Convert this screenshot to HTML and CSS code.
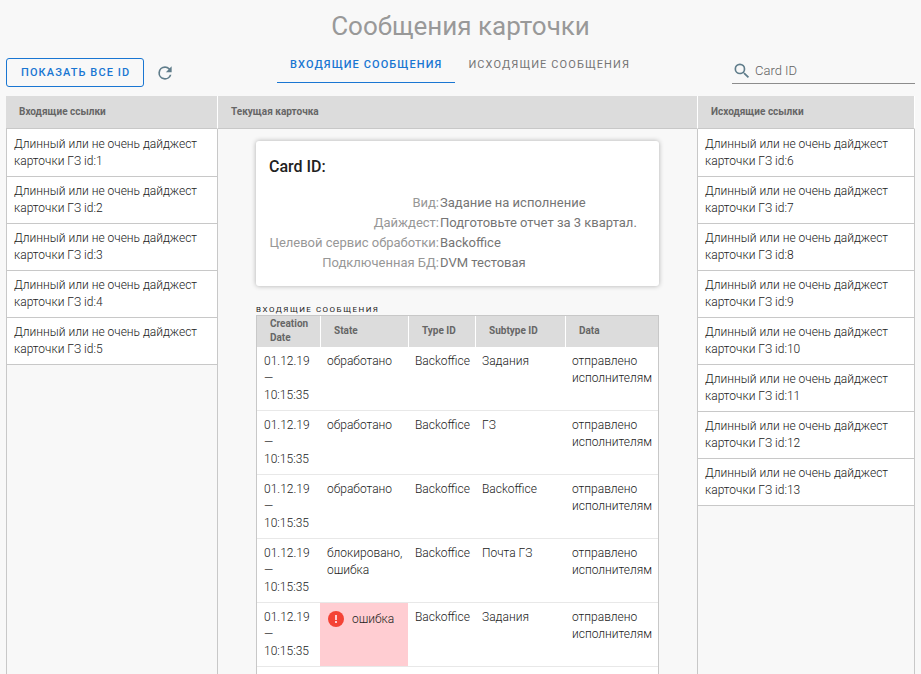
FILE: index.html
```html
<!DOCTYPE html>
<html lang="ru">
<head>
<meta charset="utf-8">
<title>Сообщения карточки</title>
<link rel="stylesheet" href="styles.css">
</head>
<body>
<div class="page">
  <h1 class="title">Сообщения карточки</h1>
  <div class="toolbar">
    <div class="actions">
      <button class="show-all" type="button">Показать все ID</button>
      <button class="refresh" type="button" aria-label="Обновить">
        <svg viewBox="0 0 24 24" width="20" height="20"><path d="M17.65 6.35A7.96 7.96 0 0 0 12 4a8 8 0 1 0 7.73 10h-2.08A6 6 0 1 1 12 6c1.66 0 3.14.69 4.22 1.78L13 11h7V4z"/></svg>
      </button>
    </div>
    <nav class="tabs">
      <a class="tab active" href="#incoming">Входящие сообщения</a>
      <a class="tab" href="#outgoing">Исходящие сообщения</a>
    </nav>
    <label class="search">
      <svg viewBox="0 0 24 24" width="20" height="20"><path d="M15.5 14h-.79l-.28-.27A6.47 6.47 0 0 0 16 9.5 6.5 6.5 0 1 0 9.5 16c1.61 0 3.09-.59 4.23-1.57l.27.28v.79l5 4.99L20.49 19zm-6 0a4.5 4.5 0 1 1 0-9 4.5 4.5 0 0 1 0 9z"/></svg>
      <input type="text" placeholder="Card ID" aria-label="Card ID">
    </label>
  </div>
  <div class="columns">
    <section class="column">
      <h2 class="column-head">Входящие ссылки</h2>
      <ul class="links">
        <li>Длинный или не очень дайджест карточки ГЗ id:1</li>
        <li>Длинный или не очень дайджест карточки ГЗ id:2</li>
        <li>Длинный или не очень дайджест карточки ГЗ id:3</li>
        <li>Длинный или не очень дайджест карточки ГЗ id:4</li>
        <li>Длинный или не очень дайджест карточки ГЗ id:5</li>
      </ul>
    </section>
    <section class="column">
      <h2 class="column-head">Текущая карточка</h2>
      <div class="current">
        <article class="card">
          <h3 class="card-title">Card ID:</h3>
          <dl class="details">
            <dt>Вид:</dt><dd>Задание на исполнение</dd>
            <dt>Дайждест:</dt><dd>Подготовьте отчет за 3 квартал.</dd>
            <dt>Целевой сервис обработки:</dt><dd>Backoffice</dd>
            <dt>Подключенная БД:</dt><dd>DVM тестовая</dd>
          </dl>
        </article>
        <h3 class="overline" id="incoming">Входящие сообщения</h3>
        <table class="messages">
          <colgroup><col class="c-date"><col class="c-state"><col class="c-type"><col class="c-subtype"><col class="c-data"></colgroup>
          <thead>
            <tr><th>Creation Date</th><th>State</th><th>Type ID</th><th>Subtype ID</th><th>Data</th></tr>
          </thead>
          <tbody>
            <tr><td>01.12.19<br>—<br>10:15:35</td><td>обработано</td><td>Backoffice</td><td>Задания</td><td>отправлено исполнителям</td></tr>
            <tr><td>01.12.19<br>—<br>10:15:35</td><td>обработано</td><td>Backoffice</td><td>ГЗ</td><td>отправлено исполнителям</td></tr>
            <tr><td>01.12.19<br>—<br>10:15:35</td><td>обработано</td><td>Backoffice</td><td>Backoffice</td><td>отправлено исполнителям</td></tr>
            <tr><td>01.12.19<br>—<br>10:15:35</td><td>блокировано, ошибка</td><td>Backoffice</td><td>Почта ГЗ</td><td>отправлено исполнителям</td></tr>
            <tr><td>01.12.19<br>—<br>10:15:35</td><td class="error"><div class="error-line"><svg viewBox="0 0 20 20" width="20" height="20"><circle cx="10" cy="10" r="8" fill="#f44336"/><path d="M9 6h2v5H9zM9 12h2v2H9z" fill="#ffcdd2"/></svg><span>ошибка</span></div></td><td>Backoffice</td><td>Задания</td><td>отправлено исполнителям</td></tr>
            <tr><td></td><td></td><td></td><td></td><td></td></tr>
          </tbody>
        </table>
      </div>
    </section>
    <section class="column">
      <h2 class="column-head">Исходящие ссылки</h2>
      <ul class="links">
        <li>Длинный или не очень дайджест карточки ГЗ id:6</li>
        <li>Длинный или не очень дайджест карточки ГЗ id:7</li>
        <li>Длинный или не очень дайджест карточки ГЗ id:8</li>
        <li>Длинный или не очень дайджест карточки ГЗ id:9</li>
        <li>Длинный или не очень дайджест карточки ГЗ id:10</li>
        <li>Длинный или не очень дайджест карточки ГЗ id:11</li>
        <li>Длинный или не очень дайджест карточки ГЗ id:12</li>
        <li>Длинный или не очень дайджест карточки ГЗ id:13</li>
      </ul>
    </section>
  </div>
</div>
</body>
</html>
```
FILE: styles.css
```css
* { box-sizing: border-box; }
body {
  margin: 0;
  background: #f8f8f8;
  color: #212121;
  font-family: Roboto, "Liberation Sans", sans-serif;
  font-size: 12px;
}
h1, h2, h3, ul, dl, dd { margin: 0; padding: 0; }
.page {
  display: flex;
  flex-direction: column;
  height: 100vh;
  padding: 0 6px;
  overflow: hidden;
}
.title {
  padding-top: 8px;
  color: #999;
  font-size: 26px;
  font-weight: 400;
  line-height: 36px;
  text-align: center;
}
.toolbar {
  display: grid;
  grid-template-columns: 271px 1fr 183px;
  align-items: end;
  padding: 10px 0 9px;
  flex: none;
}
.actions { display: flex; align-items: center; }
.show-all {
  height: 29px;
  padding: 0 13px 0 14px;
  border: 1px solid #1976d2;
  border-radius: 3px;
  background: none;
  color: #1976d2;
  font: 500 11px/27px Roboto, sans-serif;
  letter-spacing: .1em;
  text-transform: uppercase;
  white-space: nowrap;
}
.refresh {
  display: flex;
  margin-left: 11px;
  padding: 0;
  border: 0;
  background: none;
}
.refresh svg, .search svg { fill: #607d8b; flex: none; }
.tabs { display: flex; margin-bottom: 4px; }
.tab {
  height: 29px;
  padding: 0 13px;
  color: #757575;
  font-size: 11px;
  line-height: 22px;
  letter-spacing: .1em;
  text-decoration: none;
  text-transform: uppercase;
  white-space: nowrap;
}
.tab.active { border-bottom: 1px solid #1976d2; color: #1976d2; font-weight: 500; }
.search {
  display: flex;
  align-items: center;
  height: 25px;
  margin-bottom: 3px;
  border-bottom: 1px solid #8c8c8c;
}
.search input {
  width: 100%;
  min-width: 0;
  padding: 0 0 0 3px;
  border: 0;
  outline: 0;
  background: none;
  font: 300 13px/20px Roboto, sans-serif;
}
.search input::placeholder { color: #616161; opacity: 1; }
.columns {
  display: grid;
  grid-template-columns: 212fr 480fr 217fr;
  flex: 1;
  min-height: 0;
}
.column {
  min-width: 0;
  border-right: 1px solid #c8c8c8;
}
.column:first-child { border-left: 1px solid #c8c8c8; }
.column-head {
  margin-right: -1px;
  padding-left: 13px;
  border-right: 1px solid #fff;
  border-bottom: 1px solid #c8c8c8;
  background: #dcdcdc;
  color: #666;
  font-size: 10px;
  font-weight: 700;
  line-height: 32px;
}
.column:first-child .column-head { margin-left: -1px; }
.links { border-top: 1px solid #fff; list-style: none; }
.links li {
  padding: 6px 12px 6px 7px;
  border-bottom: 1px solid #c8c8c8;
  background: #fff;
  font-weight: 300;
  line-height: 17px;
}
.current { padding: 12px 38px 0; }
.card {
  padding: 15px 13px 13px;
  border-radius: 3px;
  background: #fff;
  box-shadow: 0 0 5px rgba(0, 0, 0, .3);
}
.card-title { font-size: 16px; font-weight: 500; line-height: 22px; }
.details {
  display: grid;
  grid-template-columns: 170px 1fr;
  column-gap: 1px;
  margin-top: 15px;
  font-size: 13px;
  line-height: 20px;
  white-space: nowrap;
}
.details dt { color: #979797; text-align: right; }
.details dd { color: #757575; }
.overline {
  margin-top: 18px;
  font-size: 8px;
  font-weight: 400;
  line-height: 11px;
  letter-spacing: 1.5px;
  text-transform: uppercase;
}
.messages {
  width: 100%;
  border: 1px solid #c8c8c8;
  border-spacing: 0;
  table-layout: fixed;
  background: #fff;
}
.c-date { width: 63px; }
.c-state { width: 88px; }
.c-type { width: 67px; }
.c-subtype { width: 90px; }
.messages th {
  padding: 1px 8px 2px 13px;
  border-left: 1px solid #fff;
  background: #dcdcdc;
  color: #666;
  font-size: 10px;
  font-weight: 700;
  line-height: 14px;
  text-align: left;
}
.messages th:first-child { border-left: 0; }
.messages td {
  height: 64px;
  padding: 6px 6px 6px 7px;
  border-bottom: 1px solid #e8e8e8;
  font-weight: 300;
  line-height: 17px;
  vertical-align: top;
}
.messages .error { padding-left: 6px; background: #ffcdd2; }
.error-line { display: flex; align-items: center; gap: 6px; }
```
